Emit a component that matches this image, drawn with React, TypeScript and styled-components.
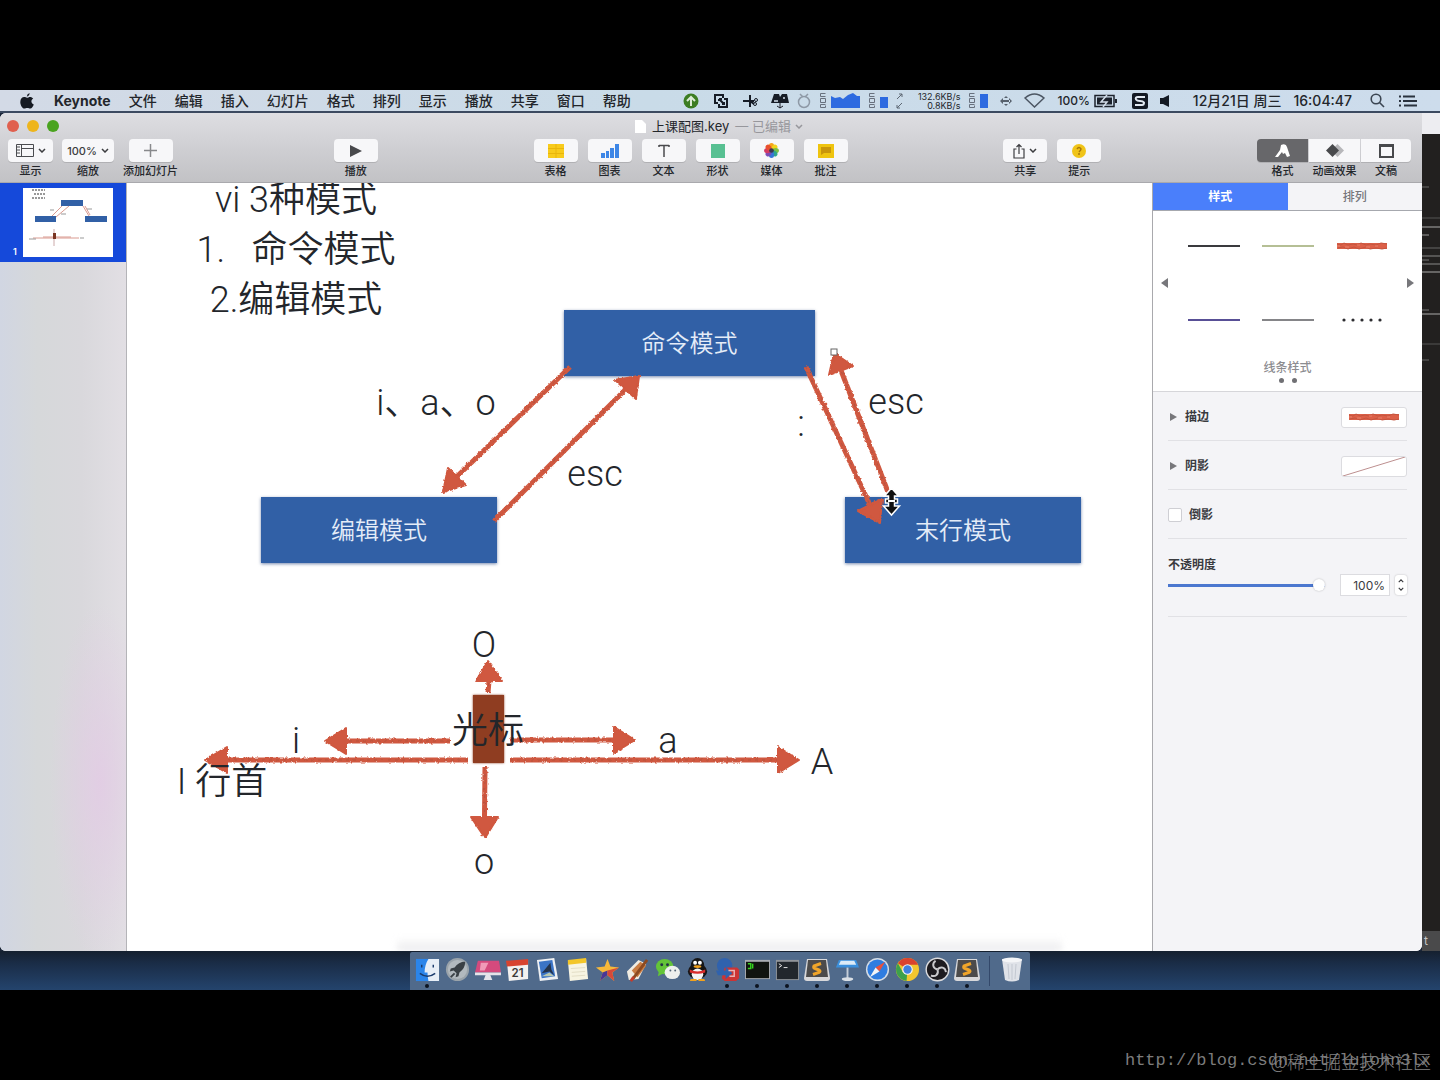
import React from "react";
import styled, { createGlobalStyle } from "styled-components";

const uiFont = `Inter, "Noto Sans CJK SC", sans-serif`;
const slideFont = `Roboto, "Noto Sans CJK SC", sans-serif`;
const ink = "#23262b";
const coral = "#d0583f";

const GlobalStyle = createGlobalStyle`
  *, *::before, *::after { box-sizing: border-box; }
  body { margin: 0; background: #000; font-family: ${uiFont}; }
  button, input { font: inherit; color: inherit; margin: 0; padding: 0; border: 0; background: none; }
  svg { display: block; flex: none; }
`;

/* ---------- shell ---------- */
const Page = styled.div`
  display: flex;
  flex-direction: column;
  min-height: 100vh;
  padding-top: 90px;
  background: #000;
  color: ${ink};
`;
const Desktop = styled.div`
  flex: 1;
  display: flex;
  flex-direction: column;
  background: #1d3250;
`;
const Work = styled.div`
  flex: 1;
  display: flex;
  background: #1b2638;
`;

/* ---------- menu bar ---------- */
const MenuBar = styled.header`
  display: flex;
  align-items: center;
  height: 23px;
  padding: 0 22px 0 20px;
  background: linear-gradient(90deg, #d3dae6, #c9dbe8 45%, #cddcec);
  border-bottom: 2px solid #3c4a60;
  font-size: 14px;
  font-weight: 500;
  line-height: 20px;
  white-space: nowrap;
`;
const Menus = styled.nav`
  display: flex;
  gap: 18px;
  margin-left: 20px;
`;
const MenuItem = styled.button<{ $strong?: boolean }>`
  font-weight: ${(p) => (p.$strong ? 700 : 500)};
`;
const Extras = styled.div`
  display: flex;
  align-items: center;
  margin-left: auto;
`;
const Extra = styled.span<{ $lead?: number; $size?: number }>`
  margin-left: ${(p) => p.$lead ?? 14}px;
  font-size: ${(p) => p.$size ?? 14}px;
`;
const Rates = styled.span`
  display: flex;
  flex-direction: column;
  width: 50px;
  margin-left: 6px;
  font-size: 9px;
  font-weight: 400;
  line-height: 9px;
  text-align: right;
`;

/* ---------- window ---------- */
const Window = styled.main`
  flex: 1;
  min-width: 0;
  display: flex;
  flex-direction: column;
  overflow: hidden;
  border-radius: 6px 0 6px 6px;
  background: #fff;
`;
const Chrome = styled.div`
  background: linear-gradient(#dedee2, #cfcfd3 50%, #c2c2c5);
  border-bottom: 1px solid #a9a9ad;
`;
const TitleRow = styled.div`
  display: grid;
  grid-template-columns: 1fr auto 1fr;
  align-items: center;
  height: 26px;
  padding: 0 7px;
`;
const Lights = styled.div`
  display: flex;
  gap: 8px;
`;
const Light = styled.button<{ $color: string }>`
  width: 12px;
  height: 12px;
  border-radius: 50%;
  background: ${(p) => p.$color};
`;
const Title = styled.div`
  display: flex;
  align-items: center;
  gap: 6px;
  padding-left: 16px;
  font-size: 13px;
  line-height: 18px;
`;
const Edited = styled.span`
  display: flex;
  align-items: center;
  gap: 4px;
  color: #97979c;
`;
const Toolbar = styled.div`
  display: flex;
  justify-content: space-between;
  height: 43px;
  padding: 0 11px 0 8px;
`;
const ToolGroup = styled.div<{ $gap?: number }>`
  display: flex;
  gap: ${(p) => p.$gap ?? 10}px;
`;
const ToolButton = styled.button`
  display: flex;
  flex-direction: column;
  align-items: center;
  gap: 2px;
  font-size: 11px;
  font-weight: 500;
  line-height: 14px;
  white-space: nowrap;
`;
const Pill = styled.span<{ $width?: number; $on?: boolean; $radius?: string }>`
  display: flex;
  align-items: center;
  justify-content: center;
  gap: 4px;
  width: ${(p) => p.$width ?? 44}px;
  height: 23px;
  border-radius: ${(p) => p.$radius ?? "4px"};
  background: ${(p) => (p.$on ? "#67676a" : "#f7f7f9")};
  box-shadow: 0 1px 0 rgba(0, 0, 0, 0.12);
  color: #3c3d40;
`;
const Body = styled.div`
  flex: 1;
  display: flex;
  min-height: 0;
`;
const Sidebar = styled.aside`
  flex: none;
  width: 127px;
  border-right: 1px solid #b4b4b8;
  background:
    radial-gradient(ellipse 50px 180px at 100px 600px, rgba(226, 204, 228, 0.9), transparent),
    linear-gradient(90deg, #d1d6e2, #d6d8da 30%, #d9d8dc 65%, #e2dfe4);
`;
const Thumb = styled.button`
  display: flex;
  align-items: flex-end;
  gap: 6px;
  width: 100%;
  height: 79px;
  padding: 4px 11px 5px 13px;
  background: #1549da;
  color: #fff;
  font-size: 9px;
  font-weight: 600;
  line-height: 11px;
`;

/* ---------- slide ---------- */
const Canvas = styled.section`
  position: relative;
  flex: 1;
  min-width: 0;
  min-height: 768px;
  overflow: hidden;
  background: #fff;
  font-family: ${slideFont};
  font-weight: 350;
  &::after {
    content: "";
    position: absolute;
    left: 270px;
    right: 90px;
    bottom: 0;
    height: 14px;
    background: linear-gradient(rgba(238, 238, 240, 0), #eaeaec);
    filter: blur(3px);
  }
`;
const Arrows = styled.svg`
  position: absolute;
  left: 0;
  top: 0;
`;
const Heading = styled.div`
  position: absolute;
  left: 49px;
  top: -8px;
  width: 240px;
  font-size: 36px;
  line-height: 50px;
  text-align: center;
  white-space: pre;
`;
const Note = styled.div<{ $x: number; $y: number }>`
  position: absolute;
  left: ${(p) => p.$x}px;
  top: ${(p) => p.$y}px;
  transform: translate(-50%, -50%);
  font-size: 36px;
  line-height: 44px;
  white-space: pre;
`;
const Box = styled.div<{ $x: number; $y: number; $w: number }>`
  position: absolute;
  left: ${(p) => p.$x}px;
  top: ${(p) => p.$y}px;
  width: ${(p) => p.$w}px;
  height: 66px;
  padding-top: 2px;
  display: flex;
  align-items: center;
  justify-content: center;
  background: #3160a6;
  box-shadow: 0 1px 3px rgba(30, 60, 120, 0.6);
  color: #e4ecf8;
  font-size: 24px;
  line-height: 30px;
`;
const Caret = styled.div`
  position: absolute;
  left: 346px;
  top: 512px;
  width: 31px;
  height: 68px;
  background: #8f3d21;
  box-shadow: 0 0 2px #8f3d21;
`;

/* ---------- inspector ---------- */
const Inspector = styled.aside`
  flex: none;
  width: 270px;
  border-left: 1px solid #a9a9ad;
  background: #f4f4f7;
  color: #3a3b3f;
  font-size: 12px;
  line-height: 16px;
`;
const Tabs = styled.div`
  display: grid;
  grid-template-columns: 1fr 1fr;
  height: 28px;
  border-bottom: 1px solid #a6a8ae;
`;
const Tab = styled.button<{ $on?: boolean }>`
  background: ${(p) => (p.$on ? "#4a7ffb" : "transparent")};
  color: ${(p) => (p.$on ? "#fff" : "#77777c")};
  font-weight: ${(p) => (p.$on ? 700 : 500)};
`;
const Styles = styled.div`
  display: flex;
  flex-direction: column;
  align-items: center;
  height: 181px;
  padding-top: 10px;
  border-bottom: 1px solid #d6d6da;
  background: #fff;
  color: #8c8c90;
`;
const Pager = styled.div`
  display: flex;
  align-items: center;
  justify-content: space-between;
  width: 100%;
  padding: 0 8px;
`;
const StyleGrid = styled.div`
  display: grid;
  grid-template-columns: repeat(3, 52px);
  grid-auto-rows: 50px;
  gap: 24px 22px;
`;
const StyleCell = styled.button`
  display: flex;
  align-items: center;
  justify-content: center;
`;
const StylesCaption = styled.div`
  margin-top: 15px;
  font-weight: 500;
`;
const Dots = styled.div`
  display: flex;
  gap: 8px;
  margin-top: 2px;
`;
const Dot = styled.span`
  width: 5px;
  height: 5px;
  border-radius: 50%;
  background: #707074;
`;
const Options = styled.div`
  padding: 0 15px;
`;
const Option = styled.div`
  display: flex;
  align-items: center;
  justify-content: space-between;
  height: 49px;
  padding-top: 2px;
  border-bottom: 1px solid #e1e1e5;
  font-weight: 600;
`;
const Disclosure = styled.button`
  display: flex;
  align-items: center;
  gap: 8px;
  padding-left: 2px;
`;
const Well = styled.button`
  display: flex;
  align-items: center;
  justify-content: center;
  width: 66px;
  height: 21px;
  border: 1px solid #dcdce0;
  border-radius: 3px;
  background: #fff;
`;
const Check = styled.label`
  display: flex;
  align-items: center;
  gap: 7px;
`;
const Tick = styled.input`
  appearance: none;
  width: 14px;
  height: 14px;
  border: 1px solid #cfcfd4;
  border-radius: 2px;
  background: #fff;
`;
const Opacity = styled.div`
  height: 78px;
  padding-top: 18px;
  border-bottom: 1px solid #e1e1e5;
  font-weight: 600;
`;
const OpacityRow = styled.div`
  display: flex;
  align-items: center;
  height: 24px;
`;
const Range = styled.input`
  appearance: none;
  flex: 1;
  min-width: 0;
  height: 12px;
  margin-right: 15px;
  background: linear-gradient(#4b77cf, #4b77cf) left center / 100% 3px no-repeat;
  &::-webkit-slider-thumb {
    appearance: none;
    width: 12px;
    height: 12px;
    border-radius: 50%;
    background: #fff;
    box-shadow: 0 0 2px rgba(0, 0, 0, 0.25);
  }
`;
const Amount = styled.input`
  width: 50px;
  height: 22px;
  padding-right: 4px;
  border: 1px solid #dcdce0;
  background: #fff;
  font-weight: 400;
  text-align: right;
`;
const Stepper = styled.div`
  display: flex;
  flex-direction: column;
  justify-content: space-around;
  width: 12px;
  height: 20px;
  margin-left: 5px;
  padding: 2px 0;
  border-radius: 3px;
  background: #fff;
  box-shadow: 0 0 2px rgba(0, 0, 0, 0.25);
`;
const Step = styled.button`
  display: flex;
  justify-content: center;
`;

/* ---------- terminal sliver behind the window ---------- */
const Behind = styled.div`
  flex: none;
  display: flex;
  flex-direction: column;
  width: 18px;
  background: #22201f;
`;
const BehindTitle = styled.div`
  height: 21px;
  background: #ededf1;
`;
const BehindLines = styled.div`
  flex: 1;
  padding-top: 12px;
`;
const BehindStatus = styled.div`
  height: 20px;
  padding: 0 2px;
  background: #4a4a4b;
  color: #c4c4c4;
  font-size: 12px;
  line-height: 20px;
`;

/* ---------- dock ---------- */
const DockShelf = styled.footer`
  display: flex;
  justify-content: center;
  height: 39px;
  padding-top: 1px;
  background: linear-gradient(#15202f, #1a2c46 30%, #24446d);
`;
const Dock = styled.div`
  display: flex;
  padding: 0 3px 0 2px;
  border-radius: 2px 2px 0 0;
  background: #506a8b;
`;
const DockItem = styled.button<{ $running?: boolean }>`
  display: flex;
  flex-direction: column;
  align-items: center;
  gap: 2px;
  width: 30px;
  padding-top: 5px;
  &::after {
    content: "";
    width: 4px;
    height: 4px;
    border-radius: 50%;
    background: ${(p) => (p.$running ? "#0c1420" : "transparent")};
  }
`;
const DockRule = styled.span`
  width: 1px;
  margin: 4px 7px;
  background: #33486a;
`;
const Letterbox = styled.div`
  display: grid;
  justify-items: end;
  align-items: center;
  height: 90px;
  padding: 52px 9px 0 0;
  white-space: nowrap;
`;
const Mark = styled.a`
  grid-area: 1 / 1;
  color: #7c7c7c;
  font: 17px/24px "Liberation Mono", monospace;
  text-decoration: none;
`;
const Credit = styled.span`
  grid-area: 1 / 1;
  color: #808080;
  font: 300 18px/24px "Noto Sans CJK SC", sans-serif;
`;

/* ---------- drawings ---------- */
const Chevron = ({ up = false, size = 8 }: { up?: boolean; size?: number }) => (
  <svg width={size} height={size / 2 + 1} viewBox="0 0 8 5" fill="none" stroke="currentColor" strokeWidth="1.5">
    <path d={up ? "M1 4l3-3 3 3" : "M1 1l3 3 3-3"} />
  </svg>
);

const Triangle = ({ left = false, h = 10 }: { left?: boolean; h?: number }) => (
  <svg width="7" height={h} viewBox="0 0 7 10" preserveAspectRatio="none" fill="#77777b">
    <path d={left ? "M7 0v10L0 5z" : "M0 0v10l7-5z"} />
  </svg>
);

const Chalk = () => (
  <svg width="52" height="8" viewBox="0 0 52 8">
    <path d="M1 4h50" stroke="#dc6048" strokeWidth="6" />
    <path d="M1 2l4 1 3-2 4 2 5-1 4 1 4-2 5 2 4-1 6 1 5-2 6 1M2 6l5-1 5 2 6-2 5 2 7-2 4 2 6-1 6 1 5-1" stroke="#c4553f" fill="none" />
    <path d="M1 4h3m5 1h4m8-2h3m6 2h4m5-1h3" stroke="#e9806b" />
  </svg>
);

const Line = ({ color }: { color: string }) => (
  <svg width="52" height="8" viewBox="0 0 52 8">
    <path d="M0 4h52" stroke={color} strokeWidth="2" />
  </svg>
);

const Meter = () => (
  <svg width="8" height="17" viewBox="0 0 8 17" fill="none" stroke="#68717e">
    <path d="M6.500 1.500h-5v3h5M1.500 6.500h5v4h-5zM6.500 12.500h-5v3h5v-2" />
  </svg>
);

type Pt = [number, number];
const arrows: { from: Pt; tip: Pt; a: Pt; b: Pt }[] = [
  { from: [570, 367], tip: [443, 492], a: [448, 468], b: [466, 485] },
  { from: [494, 521], tip: [639, 376], a: [615, 380], b: [636, 399] },
  { from: [806, 367], tip: [880, 523], a: [858, 511], b: [882, 499] },
  { from: [888, 492], tip: [834, 353], a: [829, 375], b: [853, 366] },
  { from: [488, 693], tip: [488, 661], a: [476, 681], b: [502, 681] },
  { from: [450, 741], tip: [325, 741], a: [346, 728], b: [346, 754] },
  { from: [510, 740], tip: [635, 740], a: [614, 727], b: [614, 753] },
  { from: [468, 760], tip: [205, 760], a: [227, 747], b: [227, 773] },
  { from: [510, 760], tip: [799, 760], a: [778, 747], b: [778, 773] },
  { from: [485, 767], tip: [485, 838], a: [471, 817], b: [498, 817] },
];

const ArrowLayer = () => (
  <Arrows width="1025" height="768" viewBox="127 183 1025 768">
    <filter id="chalk" filterUnits="userSpaceOnUse" x="127" y="183" width="1025" height="768">
      <feTurbulence type="fractalNoise" baseFrequency="0.35" numOctaves="2" seed="4" result="n" />
      <feDisplacementMap in="SourceGraphic" in2="n" scale="3" xChannelSelector="R" yChannelSelector="G" />
    </filter>
    <g filter="url(#chalk)">
      {arrows.map(({ from, tip, a, b }, i) => {
        const base: Pt = [(a[0] + b[0]) / 2, (a[1] + b[1]) / 2];
        return (
          <g key={i}>
            <path d={`M${from} L${base}`} stroke={coral} strokeWidth="5" />
            <path d={`M${from} L${base}`} stroke="#b5523f" strokeWidth="1" strokeDasharray="3 4" />
            <path d={`M${tip} L${a} L${b} Z`} fill={coral} stroke={coral} strokeWidth="2" strokeLinejoin="round" />
          </g>
        );
      })}
    </g>
    <rect x="831" y="349" width="6" height="6" fill="#fff" stroke="#666" />
    <path
      d="M891.500 488l7 8h-4v3h3v4h-3v3h5l-8 9-8-9h5v-3h-3v-4h3v-3h-4z"
      fill="#111"
      stroke="#fff"
      strokeWidth="1.500"
    />
    <path d="M888 501h7" stroke="#fff" strokeWidth="2" />
  </Arrows>
);

const MiniSlide = () => (
  <svg width="90" height="69" viewBox="0 0 90 69">
    <path fill="#fff" d="M0 0h90v69H0z" />
    <path d="M9 2h13M11 6h12M9 10h13" stroke="#999" strokeWidth="2" strokeDasharray="2 1" />
    <path fill="#3160a6" d="M38 12h22v6H38zM12 28h21v6H12zM62 28h22v6H62z" />
    <path d="M39 18L29 28M33 29l13-11M60 18l6 10M62 18l5 9M10 50h46M20 49h28" stroke="#d99a90" fill="none" />
    <path d="M31 41v17" stroke="#caa" />
    <path d="M30 45h3v6h-3z" fill="#7a3522" />
    <path d="M27 22h4M38 26h5M64 21h5M6 51h7M57 50h4" stroke="#999" />
  </svg>
);

const ShareIcon = () => (
  <svg width="12" height="16" viewBox="0 0 12 16" fill="none" stroke="#3c3d40" strokeWidth="1.200">
    <path d="M3.500 6H1v9h10V6H8.500M6 11V1.500M3.500 4L6 1.500 8.500 4" />
  </svg>
);

const insertTools: [string, React.ReactNode][] = [
  ["表格", <svg width="16" height="14" viewBox="0 0 16 14"><path fill="#f8cb1c" d="M0 0h16v14H0z" /><path stroke="#e9b60c" d="M0 4.500h16M0 9.500h16M8 0v14" /></svg>],
  ["图表", <svg width="18" height="14" viewBox="0 0 18 14"><path fill="#3d86e6" d="M0 9h4v5H0zM5 7h3v7H5zM9 4h4v10H9zM14 0h4v14h-4z" /></svg>],
  ["文本", <svg width="14" height="14" viewBox="0 0 14 14" fill="none" stroke="#4a4a4d" strokeWidth="1.500"><path d="M2 1.500h10M7 1.500V13M2 1v2m10-2v2" /></svg>],
  ["形状", <svg width="14" height="14" viewBox="0 0 14 14"><path fill="#58c092" d="M0 0h14v14H0z" /></svg>],
  ["媒体", (
    <svg width="15" height="15" viewBox="-8 -8 16 16">
      {["#f5a31c", "#f2d21b", "#7cc142", "#2fa58b", "#3576d6", "#7c4bb5", "#d43a63", "#e8502e"].map((c, i) => (
        <ellipse key={c} cx="0" cy="-4.500" rx="2.800" ry="3.400" fill={c} transform={`rotate(${i * 45})`} />
      ))}
      <circle r="2.500" fill="#3c3650" />
    </svg>
  )],
  ["批注", <svg width="16" height="14" viewBox="0 0 16 14"><path fill="#efc40f" d="M0 0h16v14H0z" /><path fill="#c9960a" d="M3 3h10v6H6l-3 2z" /></svg>],
];

const Sublime = () => (
  <svg width="28" height="25" viewBox="0 0 28 25">
    <path d="M4 2h20l3 19q0 3-3 3H4q-3 0-3-3z" fill="#d8d8da" />
    <path d="M5 3h18l2 17H3z" fill="#4c4b4b" />
    <path d="M18 6.500l-7 2.500q-1 2 1 2.500l4 1.500q2 1 0 2.500l-6 2" fill="none" stroke="#f0a52a" strokeWidth="3" />
  </svg>
);
const blade = "M12 12C7 11 6 6 10 3";

const dockApps: { name: string; running?: boolean; art: React.ReactNode }[] = [
  { name: "Finder", running: true, art: <><path fill="#2b85ea" d="M0 1h24v23H0z" /><path fill="#e7eef6" d="M13 1h11v23H13q-1-5-1-9h-3q0-8 4-14z" /><path d="M6 7v3m12-3v3M4 16q8 6 16 0" stroke="#1b3b6c" strokeWidth="1.500" fill="none" /></> },
  { name: "Launchpad", art: <><circle cx="12" cy="12" r="12" fill="#9aa3aa" /><circle cx="12" cy="12" r="10" fill="#b2b9be" /><path d="M20 4q-7 0-11 6l-4 1-1 3 4-1 3 3-1 4 3-1 1-4q6-4 6-11z" fill="#3a4045" /><path d="M5 20l4-4" stroke="#3a4045" strokeWidth="2" /></> },
  { name: "CleanMyMac", art: <><path fill="#d44a7d" d="M2 3h22l2 12H-1z" /><path fill="#f09ab8" d="M5 5h8l-4 8H4z" /><path fill="#e4e4ea" d="M-1 15h27v3H-1zM10 18h5l2 5H8z" /></> },
  { name: "日历", art: <><path fill="#f3f1ef" d="M1 4l22-2v20L3 24z" /><path fill="#d8432f" d="M0 3l23-2v6L1 9z" /><text x="12" y="20" fontSize="12" fontWeight="600" textAnchor="middle" fill="#3b3b3b" fontFamily="Inter">21</text></> },
  { name: "邮件", art: <><path fill="#eef0f2" d="M1 2l18-2 4 22-19 2z" /><path fill="#3b74c6" d="M3 4l14-2 3 17-14 2z" /><path fill="#24334a" d="M6 16l9-11 1 7 3 6-5-4z" /><path fill="#b9c8b0" d="M6 19l8-4 5 4z" /></> },
  { name: "备忘录", art: <><path fill="#f7f4e2" d="M2 3l19-2 2 21-19 2z" /><path fill="#f3c629" d="M2 2l19-2v5L2 7z" /><path d="M5 11l15-1M6 15l14-1M6 19l14-1" stroke="#e2ddc5" /></> },
  { name: "iMovie", art: <><path fill="#f6b83a" d="M12 1l3 8 9 1-7 5 2 9-7-6-8 6 3-9-7-5 9-1z" /><path fill="#4a3796" d="M12 18l-8 6 3-9 5-2z" /><path fill="#d6493a" d="M12 13l12-3-7 5 2 9-7-6z" /></> },
  { name: "画笔", art: <><path fill="#f0ece2" d="M1 14L13 2l8 4-8 16-10 1z" /><path fill="#c97c43" d="M6 13l9-9 6 4-9 12z" /><path d="M22 2L7 22" stroke="#8d4a20" strokeWidth="3" /><path d="M5 24l3-4" stroke="#c43c2c" strokeWidth="3" /></> },
  { name: "微信", art: <><ellipse cx="9" cy="9" rx="9" ry="8" fill="#63c438" /><path fill="#63c438" d="M3 14l-1 5 6-3z" /><circle cx="6" cy="7" r="1.500" fill="#234" /><circle cx="12" cy="7" r="1.500" fill="#234" /><ellipse cx="17" cy="15" rx="8" ry="7" fill="#eef0ee" /><circle cx="15" cy="13" r="1" fill="#567" /><circle cx="20" cy="13" r="1" fill="#567" /></> },
  { name: "QQ", art: <><ellipse cx="12" cy="14" rx="10" ry="8" fill="#161616" /><ellipse cx="12" cy="8" rx="7" ry="8" fill="#161616" /><ellipse cx="12" cy="17" rx="6" ry="6" fill="#f5f5f5" /><circle cx="9.500" cy="5" r="2" fill="#fff" /><circle cx="14.500" cy="5" r="2" fill="#fff" /><ellipse cx="12" cy="9" rx="4" ry="1.500" fill="#f3a21c" /><path d="M4 12q8 4 16 0v3q-8 3-16 0z" fill="#d92c2c" /><path d="M5 22h6v2H4zM13 22h6l1 2h-7z" fill="#f3a21c" /></> },
  { name: "VirtualBox", running: true, art: <><circle cx="9" cy="8" r="8" fill="#2f62ae" /><path fill="#cc3434" d="M9 10h13l2 2v9l-3 3H9l-3-3z" /><path fill="#2f62ae" d="M0 13h10V9l7 7-7 6v-4H2z" /><path d="M13 13h6v6h-5" stroke="#e9b3b3" strokeWidth="1.500" fill="none" /></> },
  { name: "iTerm", running: true, art: <><path fill="#a9adb2" d="M-1 2h26v20H-1z" /><path fill="#11140f" d="M0 4h24v17H0z" /><path d="M2 6h3v5H2m5-5v5" stroke="#37d31f" strokeWidth="1.500" fill="none" /></> },
  { name: "终端", running: true, art: <><path fill="#90949a" d="M0 2h24v21H0z" /><path fill="#22272d" d="M1 4h22v18H1z" /><path d="M3 6l3 2-3 2m5 0h4" stroke="#e8e8e8" fill="none" /></> },
  { name: "Sublime Text", running: true, art: null },
  { name: "Keynote", running: true, art: <><path fill="#3a8fdc" d="M3 2h18l3 8H0z" /><path fill="#dcebf7" d="M5 3h14l2 4H3z" /><path fill="#c4ced8" d="M11 10h2v11h-2z" /><ellipse cx="12" cy="22" rx="6" ry="2" fill="#d9dfe5" /></> },
  { name: "Safari", running: true, art: <><circle cx="12" cy="12" r="12" fill="#d5dde6" /><circle cx="12" cy="12" r="10.500" fill="#2f7de0" /><path fill="#e8513d" d="M20 4l-10 6 4 4z" /><path fill="#f2f4f6" d="M4 20l6-10 4 4z" /></> },
  { name: "Chrome", running: true, art: <><circle cx="12" cy="12" r="12" fill="#f2c62f" /><path fill="#d9432f" d="M12 12L2 5.500a12 12 0 0 1 21 1.500H12z" /><path fill="#3da14b" d="M12 12l-1 12A12 12 0 0 1 2 5.500l5 9z" /><circle cx="12" cy="12" r="5.500" fill="#f4f4f4" /><circle cx="12" cy="12" r="4.300" fill="#3f80e0" /></> },
  { name: "OBS", running: true, art: <><circle cx="12" cy="12" r="12.500" fill="#dcdcde" /><circle cx="12" cy="12" r="11" fill="#1d1b1f" />{[0, 120, 240].map((r) => <path key={r} d={blade} fill="none" stroke="#c9c9cc" strokeWidth="2" transform={`rotate(${r} 12 12)`} />)}</> },
  { name: "Sublime Text 2", running: true, art: null },
];

const menus = ["文件", "编辑", "插入", "幻灯片", "格式", "排列", "显示", "播放", "共享", "窗口", "帮助"];
const lines: [number, string][] = [
  [60, "#666"], [91, "#555"], [100, "#aaa"], [108, "#999"], [121, "#666"], [129, "#888"], [133, "#777"],
  [137, "#888"], [145, "#aaa"], [183, "#777"], [187, "#aaa"], [217, "#555"], [233, "#666"],
];

export default function App() {
  return (
    <>
      <GlobalStyle />
      <Page>
        <Desktop>
          <MenuBar>
            <svg width="14" height="16" viewBox="0 0 14 16" fill="#151a22">
              <path d="M9.500 0q.3 2.500-2.700 3.700Q6.700 1.300 9.500 0zM7 4.800c1 0 1.700-.8 3.200-.8 1 0 2.200.5 3 1.600-2.700 1.600-2.200 5 .6 6-.8 2-2 4-3.500 4-1.200 0-1.600-.7-3-.7s-1.900.7-3 .7C2.300 15.600.3 12 .3 9 .3 6 2.200 4.100 4.200 4.100c1.200 0 2 .7 2.800.7z" />
            </svg>
            <Menus>
              <MenuItem $strong>Keynote</MenuItem>
              {menus.map((m) => <MenuItem key={m}>{m}</MenuItem>)}
            </Menus>
            <Extras>
              <svg width="16" height="16" viewBox="0 0 16 16"><circle cx="8" cy="8" r="7.500" fill="#3c7d22" /><path d="M8 13V5M4 8l4-4 4 4" stroke="#dcebd6" strokeWidth="2" fill="none" /></svg>
              <Extra><svg width="16" height="16" viewBox="0 0 16 16" fill="none" stroke="#161c26" strokeWidth="2"><path d="M5 10H2V2h8v3M6 6h3m2 0h3v8H6v-3m0-5v2m3 3h2V9M6 6l5 5" /></svg></Extra>
              <Extra><svg width="16" height="16" viewBox="0 0 16 16" fill="none" stroke="#161c26" strokeWidth="2"><path d="M0 8h11M7 2v12M7 8l4 3" /><circle cx="13" cy="7" r="1.500" strokeWidth="1" /><circle cx="12" cy="11" r="1.500" strokeWidth="1" /></svg></Extra>
              <Extra $lead={12}><svg width="18" height="16" viewBox="0 0 18 16"><path d="M3 1h5l1 3 2-3h5l2 9H0z" fill="#161c26" /><path d="M3 8h4m5-3h2M9 10v5M6 13l3 2 3-2" stroke="#d3deea" strokeWidth="1.500" fill="none" /><path d="M9 10v5m-3-2l3 2 3-2" stroke="#161c26" fill="none" /></svg></Extra>
              <Extra $lead={8}><svg width="14" height="16" viewBox="0 0 14 16" fill="none" stroke="#8e99a6" strokeWidth="1.500"><circle cx="7" cy="9" r="5.500" /><path d="M3 1l3 3M11 1L8 4" /></svg></Extra>
              <Extra $lead={8}><Meter /></Extra>
              <Extra $lead={4}><svg width="29" height="15" viewBox="0 0 29 15" fill="#2d6ae0"><path d="M0 3l4 2 5-1 3 2 5-4 5-2 4 3h3v12H0z" /></svg></Extra>
              <Extra $lead={8}><Meter /></Extra>
              <Extra $lead={4}><svg width="8" height="15" viewBox="0 0 8 15"><path fill="#2d6ae0" d="M0 4h8v11H0z" /></svg></Extra>
              <Extra $lead={8}><svg width="8" height="16" viewBox="0 0 8 16" fill="none" stroke="#5d6773"><path d="M1 6l5-5M3 1h3v3M6 10l-5 5M1 12v3h3" /></svg></Extra>
              <Rates><span>132.6KB/s</span><span>0.8KB/s</span></Rates>
              <Extra $lead={8}><Meter /></Extra>
              <Extra $lead={4}><svg width="8" height="15" viewBox="0 0 8 15"><path fill="#2d6ae0" d="M0 1h8v14H0z" /></svg></Extra>
              <Extra $lead={12}><svg width="12" height="14" viewBox="0 0 12 14" fill="#56606c"><path d="M0 7l3-3v6zM12 7L9 4v6zM6 2l2 2H4zM6 12l2-2H4zM2 6h8v2H2z" /></svg></Extra>
              <Extra $lead={12}><svg width="21" height="15" viewBox="0 0 21 15" fill="none" stroke="#4c5663" strokeWidth="1.500"><path d="M1 5q9.500-8 19 0l-9.500 9z" /></svg></Extra>
              <Extra $lead={12} $size={12}>100%</Extra>
              <Extra $lead={4}><svg width="24" height="14" viewBox="0 0 24 14"><path d="M1 1.500h19v11H1z" fill="none" stroke="#1c222c" strokeWidth="1.500" /><path d="M3 3.500h15v7H3z" fill="#1c222c" /><path d="M22 5v4" stroke="#1c222c" strokeWidth="2" /><path d="M13 1L7 8h6l-4 5" stroke="#d3deea" fill="none" strokeWidth="1.500" /></svg></Extra>
              <Extra><svg width="16" height="16" viewBox="0 0 16 16"><rect width="16" height="16" rx="2" fill="#141a24" /><path d="M13 4H6Q3 4 4 6.500q1 1.500 4 1.500t4 1.500q0 2.500-2 2.500H3" stroke="#e3eaf2" strokeWidth="2" fill="none" /></svg></Extra>
              <Extra $lead={12}><svg width="9" height="12" viewBox="0 0 9 12" fill="#141a24"><path d="M0 3h3l6-3v12L3 9H0z" /></svg></Extra>
              <Extra $lead={24}>12月21日 周三</Extra>
              <Extra $lead={12}>16:04:47</Extra>
              <Extra $lead={18}><svg width="15" height="15" viewBox="0 0 15 15" fill="none" stroke="#3b4552" strokeWidth="1.600"><circle cx="6" cy="6" r="4.800" /><path d="M9.500 9.500L14 14" /></svg></Extra>
              <Extra><svg width="19" height="12" viewBox="0 0 19 12" fill="none" stroke="#2a323e" strokeWidth="2"><path d="M0 1.500h2m2 0h12M0 6h2m2 0h14M0 10.500h2m3 0h13" /></svg></Extra>
            </Extras>
          </MenuBar>

          <Work>
            <Window>
              <Chrome>
                <TitleRow>
                  <Lights>
                    <Light $color="#e0604f" aria-label="关闭" />
                    <Light $color="#eeb51c" aria-label="最小化" />
                    <Light $color="#4aa31f" aria-label="缩放窗口" />
                  </Lights>
                  <Title>
                    <svg width="11" height="13" viewBox="0 0 11 13" fill="#fff"><path d="M0 0h7l4 4v9H0z" /></svg>
                    <span>上课配图.key</span>
                    <Edited>— 已编辑 <Chevron /></Edited>
                  </Title>
                </TitleRow>
                <Toolbar>
                  <ToolGroup $gap={9}>
                    <ToolButton>
                      <Pill $width={45}>
                        <svg width="18" height="13" viewBox="0 0 18 13" fill="none" stroke="#4b4c50"><path d="M.5.500h17v12H.500zM5.500.500v12M5.500 4.500h12M1 3h3M1 6h3M1 9h3" /></svg>
                        <Chevron />
                      </Pill>
                      显示
                    </ToolButton>
                    <ToolButton><Pill $width={52}>100%<Chevron /></Pill>缩放</ToolButton>
                    <ToolButton>
                      <Pill><svg width="13" height="13" viewBox="0 0 13 13" stroke="#88898c" strokeWidth="1.500"><path d="M6.500 0v13M0 6.500h13" /></svg></Pill>
                      添加幻灯片
                    </ToolButton>
                  </ToolGroup>
                  <ToolGroup>
                    <ToolButton><Pill><svg width="12" height="12" viewBox="0 0 12 12" fill="#48494c"><path d="M0 0l12 6-12 6z" /></svg></Pill>播放</ToolButton>
                  </ToolGroup>
                  <ToolGroup>
                    {insertTools.map(([name, icon]) => <ToolButton key={name}><Pill>{icon}</Pill>{name}</ToolButton>)}
                  </ToolGroup>
                  <ToolGroup>
                    <ToolButton><Pill><ShareIcon /><Chevron /></Pill>共享</ToolButton>
                    <ToolButton>
                      <Pill>
                        <svg width="14" height="14" viewBox="0 0 14 14"><circle cx="7" cy="7" r="7" fill="#f0c419" /><path d="M5 5q2-3 4 0 0 1-2 3m0 1v2" fill="none" stroke="#a8780a" strokeWidth="1.500" /></svg>
                      </Pill>
                      提示
                    </ToolButton>
                  </ToolGroup>
                  <ToolGroup $gap={1}>
                    <ToolButton>
                      <Pill $width={51} $on $radius="4px 0 0 4px">
                        <svg width="17" height="14" viewBox="0 0 17 14" fill="#fff"><path d="M7 1q5-2 6 2l3 9-3 1-2-4-2 1-1-2-4 5H1l5-7z" /></svg>
                      </Pill>
                      格式
                    </ToolButton>
                    <ToolButton>
                      <Pill $width={51} $radius="0">
                        <svg width="18" height="13" viewBox="0 0 18 13"><path d="M11.500 0L18 6.500 11.500 13 5 6.500z" fill="#b7b7ba" /><path d="M6.500 0L13 6.500 6.500 13 0 6.500z" fill="#48494c" /></svg>
                      </Pill>
                      动画效果
                    </ToolButton>
                    <ToolButton>
                      <Pill $width={50} $radius="0 4px 4px 0">
                        <svg width="15" height="14" viewBox="0 0 15 14" fill="none" stroke="#48494c" strokeWidth="2"><path d="M1 1h13v12H1z" /><path d="M1 2h13" /></svg>
                      </Pill>
                      文稿
                    </ToolButton>
                  </ToolGroup>
                </Toolbar>
              </Chrome>

              <Body>
                <Sidebar>
                  <Thumb><span>1</span><MiniSlide /></Thumb>
                </Sidebar>

                <Canvas>
                  <Heading>{"vi 3种模式\n1.   命令模式\n2.编辑模式"}</Heading>
                  <Box $x={437} $y={127} $w={251}>命令模式</Box>
                  <Box $x={134} $y={314} $w={236}>编辑模式</Box>
                  <Box $x={718} $y={314} $w={236}>末行模式</Box>
                  <Caret />
                  <ArrowLayer />
                  <Note $x={309} $y={220}>i、a、o</Note>
                  <Note $x={468} $y={291}>esc</Note>
                  <Note $x={769} $y={219}>esc</Note>
                  <Note $x={674} $y={241}>:</Note>
                  <Note $x={357} $y={462}>O</Note>
                  <Note $x={169} $y={558}>i</Note>
                  <Note $x={361} $y={548}>光标</Note>
                  <Note $x={541} $y={558}>a</Note>
                  <Note $x={695} $y={579}>A</Note>
                  <Note $x={95} $y={599}>I 行首</Note>
                  <Note $x={357} $y={679}>o</Note>
                </Canvas>

                <Inspector>
                  <Tabs>
                    <Tab $on>样式</Tab>
                    <Tab>排列</Tab>
                  </Tabs>
                  <Styles>
                    <Pager>
                      <button aria-label="上一页"><Triangle left /></button>
                      <StyleGrid>
                        <StyleCell aria-label="黑色线条"><Line color="#3a3a3e" /></StyleCell>
                        <StyleCell aria-label="绿色线条"><Line color="#b5bf95" /></StyleCell>
                        <StyleCell aria-label="粉笔线条"><Chalk /></StyleCell>
                        <StyleCell aria-label="紫色线条"><Line color="#584f96" /></StyleCell>
                        <StyleCell aria-label="灰色线条"><Line color="#858588" /></StyleCell>
                        <StyleCell aria-label="点状线条">
                          <svg width="42" height="4" viewBox="0 0 42 4" fill="#2c2c30">
                            {[3, 12, 21, 30, 39].map((x) => <circle key={x} cx={x} cy="2" r="1.600" />)}
                          </svg>
                        </StyleCell>
                      </StyleGrid>
                      <button aria-label="下一页"><Triangle /></button>
                    </Pager>
                    <StylesCaption>线条样式</StylesCaption>
                    <Dots><Dot /><Dot /></Dots>
                  </Styles>
                  <Options>
                    <Option>
                      <Disclosure><Triangle h={8} />描边</Disclosure>
                      <Well aria-label="描边样式"><Chalk /></Well>
                    </Option>
                    <Option>
                      <Disclosure><Triangle h={8} />阴影</Disclosure>
                      <Well aria-label="阴影样式">
                        <svg width="64" height="19" viewBox="0 0 64 19"><path d="M1 19L63 0" stroke="#bd8f8f" /></svg>
                      </Well>
                    </Option>
                    <Option>
                      <Check><Tick type="checkbox" />倒影</Check>
                    </Option>
                    <Opacity>
                      <label htmlFor="opacity">不透明度</label>
                      <OpacityRow>
                        <Range id="opacity" type="range" min="0" max="100" defaultValue="100" />
                        <Amount type="text" aria-label="不透明度数值" defaultValue="100%" />
                        <Stepper>
                          <Step aria-label="增加"><Chevron up size={6} /></Step>
                          <Step aria-label="减少"><Chevron size={6} /></Step>
                        </Stepper>
                      </OpacityRow>
                    </Opacity>
                  </Options>
                </Inspector>
              </Body>
            </Window>

            <Behind>
              <BehindTitle />
              <BehindLines>
                <svg width="18" height="240" viewBox="0 0 18 240">
                  {lines.map(([y, c], i) => <path key={y} d={`M0 ${y - 19}h${i % 3 ? 18 : 7}`} stroke={c} />)}
                </svg>
              </BehindLines>
              <BehindStatus>t</BehindStatus>
            </Behind>
          </Work>

          <DockShelf>
            <Dock>
              {dockApps.map(({ name, running, art }) => (
                <DockItem key={name} $running={running} aria-label={name}>
                  {art ? <svg width="25" height="25" viewBox="-1 -1 26 26" overflow="visible">{art}</svg> : <Sublime />}
                </DockItem>
              ))}
              <DockRule />
              <DockItem aria-label="废纸篓">
                <svg width="22" height="25" viewBox="0 0 22 25"><path d="M1 2h20l-3 21q-7 3-14 0z" fill="#dfe2e8" /><ellipse cx="11" cy="3" rx="10" ry="2.500" fill="#f4f5f7" /><path d="M7 7l1 15m3-15v16m4-16l-1 15" stroke="#c3c8d1" /></svg>
              </DockItem>
            </Dock>
          </DockShelf>
        </Desktop>
        <Letterbox>
          <Mark href="http://blog.csdn.net/lujohn3lx">http://blog.csdn.net/lujohn3lx</Mark>
          <Credit>@稀土掘金技术社区</Credit>
        </Letterbox>
      </Page>
    </>
  );
}
